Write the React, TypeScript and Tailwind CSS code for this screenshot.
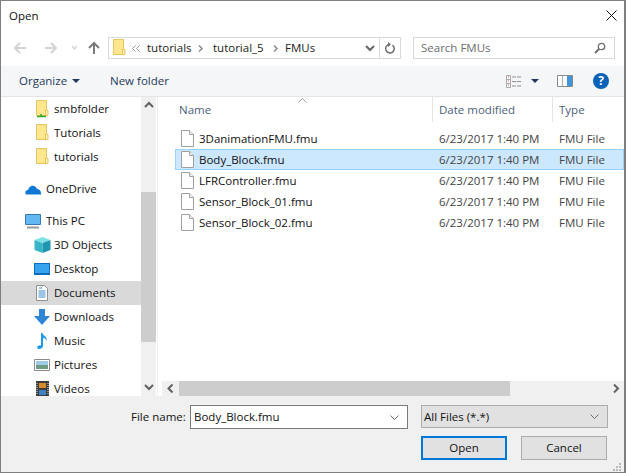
import type { ReactNode } from "react";

function FolderIcon({ share }: { share?: boolean }) {
  return (
    <svg width="14" height="18" viewBox="0 0 14 18" className="shrink-0">
      <path d="M1.500 .5h10v15h-10z" fill="#ffe68f" stroke="#e8c65d" />
      <path d="M10.500 10.500h2.500v5h-2.500z" fill="#fff3bd" stroke="#e8c65d" />
      {share && <path d="M6 14v2M2 16.500h9" stroke="#2fa82f" strokeWidth="1.600" fill="none" />}
    </svg>
  );
}

function FileIcon() {
  return (
    <svg width="13" height="17" viewBox="0 0 13 17" className="shrink-0">
      <path d="M.5 .5h8l4 4v12H.5z" fill="#fff" stroke="#a0a0a0" />
      <path d="M8.500 .5v4h4" fill="#f2f2f2" stroke="#a0a0a0" />
    </svg>
  );
}

function Chevron({ dir, color = "#606060" }: { dir: "up" | "down" | "left" | "right"; color?: string }) {
  const paths = {
    up: "M1 6l4-4 4 4",
    down: "M1 2l4 4 4-4",
    left: "M6.500 .5l-4 4 4 4",
    right: "M3 .5l4 4-4 4",
  };
  return (
    <svg width="10" height="9" viewBox="0 0 10 9">
      <path d={paths[dir]} fill="none" stroke={color} strokeWidth="2" />
    </svg>
  );
}

function Caret() {
  return (
    <svg width="8" height="4" viewBox="0 0 8 4">
      <path d="M0 0h8L4 4z" fill="#1e395b" />
    </svg>
  );
}

function Crumb() {
  return (
    <svg width="5" height="7" viewBox="0 0 5 7">
      <path d="M1 .5l3 3-3 3" fill="none" stroke="#8a8a8a" strokeWidth="1.500" />
    </svg>
  );
}

function NavRow({ icon, label, selected }: { icon: ReactNode; label: string; selected?: boolean }) {
  return (
    <div className={`h-6 flex items-center shrink-0 pl-[32px] ${selected ? "bg-[#d9d9d9]" : ""}`}>
      <div className="w-[18px] h-[18px] flex items-center justify-center shrink-0">{icon}</div>
      <span className="ml-[3px] whitespace-nowrap">{label}</span>
    </div>
  );
}

function FileRow({ name, selected }: { name: string; selected?: boolean }) {
  return (
    <div
      className={`h-[21px] flex items-center shrink-0 border whitespace-nowrap ${
        selected ? "bg-[#cce8ff] border-[#99d1ff]" : "border-transparent"
      }`}
    >
      <div className="w-[263px] pl-[5px] flex items-center shrink-0">
        <FileIcon />
        <span className="ml-[5px]">{name}</span>
      </div>
      <span className="w-[120px] shrink-0 text-[#444]">6/23/2017 1:40 PM</span>
      <span className="text-[#444]">FMU File</span>
    </div>
  );
}

const files = ["3DanimationFMU.fmu", "Body_Block.fmu", "LFRController.fmu", "Sensor_Block_01.fmu", "Sensor_Block_02.fmu"];

export default function App() {
  return (
    <div className="w-[626px] h-[473px] relative overflow-hidden bg-white border border-[#7f7f7f] border-r-2 flex flex-col text-[11.5px] leading-none text-[#111] font-['Open_Sans',sans-serif]">
      {/* Title bar */}
      <div className="h-[29px] shrink-0 flex items-center justify-between pl-[8px] pr-[7px]">
        <span>Open</span>
        <svg width="11" height="11" viewBox="0 0 11 11">
          <path d="M.5 .5l10 10M10.500 .5l-10 10" stroke="#111" strokeWidth="1" fill="none" />
        </svg>
      </div>

      {/* Address row */}
      <div className="h-[36px] shrink-0 flex items-center pl-[13px]">
        <svg width="92" height="14" viewBox="0 0 92 14" className="shrink-0">
          <path d="M1 7h11M6 2L1 7l5 5" fill="none" stroke="#d3d3d3" strokeWidth="2" />
          <path d="M31 7h11M37 2l5 5-5 5" fill="none" stroke="#d3d3d3" strokeWidth="2" />
          <path d="M58 5l2.500 3 2.500-3" fill="none" stroke="#d3d3d3" strokeWidth="1.300" />
          <path d="M80 13V2M75 7l5-5 5 5" fill="none" stroke="#7a7a7a" strokeWidth="2" />
        </svg>
        <div className="ml-[2px] w-[293px] h-[22px] border border-[#d9d9d9] flex items-center pl-[3px] shrink-0">
          <FolderIcon />
          <svg width="8" height="7" viewBox="0 0 8 7" className="ml-[6px]">
            <path d="M3.500 .5l-3 3 3 3M7.500 .5l-3 3 3 3" fill="none" stroke="#999" />
          </svg>
          <span className="ml-[7px] w-[46px] text-[#222]">tutorials</span>
          <span className="ml-[5px] flex"><Crumb /></span>
          <span className="ml-[10px] w-[50px] text-[#222]">tutorial_5</span>
          <span className="ml-[10px] flex"><Crumb /></span>
          <span className="ml-[7px] text-[#222]">FMUs</span>
          <div className="ml-auto flex items-center h-full">
            <Chevron dir="down" color="#666" />
            <div className="ml-[4px] w-px h-full bg-[#d9d9d9]" />
            <svg width="12" height="13" viewBox="0 0 12 13" className="mx-[4px]">
              <path d="M8.500 3.200a4.300 4.300 0 1 1-3-.8" fill="none" stroke="#6e6e6e" strokeWidth="1.500" />
              <path d="M4 0l3 2.500-3 2.500z" fill="#6e6e6e" />
            </svg>
          </div>
        </div>
        <div className="ml-[12px] w-[202px] h-[22px] border border-[#d9d9d9] flex items-center justify-between pl-[7px] pr-[8px] shrink-0 text-[#6d6d6d]">
          <span>Search FMUs</span>
          <svg width="12" height="12" viewBox="0 0 12 12">
            <circle cx="7.500" cy="4.500" r="3.200" fill="none" stroke="#6e6e6e" strokeWidth="1.300" />
            <path d="M5 7l-4 4" stroke="#6e6e6e" strokeWidth="2" />
          </svg>
        </div>
      </div>

      {/* Command bar */}
      <div className="h-[31px] shrink-0 bg-[#f5f6f7] border-b border-[#e5e5e5] flex items-center pl-[18px] text-[#1e395b]">
        <span className="w-[48px]">Organize</span>
        <span className="ml-[5px] flex"><Caret /></span>
        <span className="ml-[30px]">New folder</span>
        <div className="ml-auto flex items-center pr-[15px]">
          <svg width="16" height="13" viewBox="0 0 16 13">
            <path d="M.5 .5h4v12h-4zM.5 4.500h4M.5 8.500h4" fill="#fff" stroke="#a8a8a8" />
            <path d="M6 2h9M6 6.500h9M6 11h9" stroke="#8f8f8f" strokeDasharray="4 1" />
            <path d="M2 2h1M2 6h1M2 10h1" stroke="#c05050" />
          </svg>
          <span className="ml-[9px] flex"><Caret /></span>
          <svg width="16" height="12" viewBox="0 0 16 12" className="ml-[18px]">
            <path d="M.5 .5h15v11H.5z" fill="#fff" stroke="#8a8a8a" />
            <path d="M10 1h5v10h-5z" fill="#3f94dc" />
            <path d="M5.500 1v10" stroke="#b0b0b0" />
          </svg>
          <div className="ml-[20px] w-[16px] h-[16px] rounded-full bg-[#0a62b8] text-white font-bold text-[12px] flex items-center justify-center">?</div>
        </div>
      </div>

      {/* Main area */}
      <div className="flex-1 min-h-0 flex">
        {/* Navigation pane */}
        <div className="w-[140px] shrink-0 flex flex-col overflow-hidden">
          <NavRow label="smbfolder" icon={<FolderIcon share />} />
          <NavRow label="Tutorials" icon={<FolderIcon />} />
          <NavRow label="tutorials" icon={<FolderIcon />} />
          <div className="h-2 shrink-0" />
          <div className="h-6 shrink-0 flex items-center pl-[24px]">
            <svg width="17" height="11" viewBox="0 0 17 11">
              <path d="M1 10.500c-1.500-2-.5-4.500 2-4.500 .8-3 3.500-5 6-4 1.500 .5 2.500 1.500 3 3 2.500 0 4.500 2.500 4 5.500z" fill="#0f78d4" />
            </svg>
            <span className="ml-[4px]">OneDrive</span>
          </div>
          <div className="h-2 shrink-0" />
          <div className="h-6 shrink-0 flex items-center pl-[24px]">
            <svg width="16" height="15" viewBox="0 0 16 15">
              <path d="M.5 .5h15v10H.5z" fill="#62b8f0" stroke="#3a78b0" />
              <path d="M2 13.500h12" stroke="#9a9a9a" strokeWidth="2" />
            </svg>
            <span className="ml-[5px]">This PC</span>
          </div>
          <NavRow
            label="3D Objects"
            icon={
              <svg width="17" height="16" viewBox="0 0 17 16">
                <path d="M8.500 0l8 3-8 3-8-3z" fill="#7fe0e6" />
                <path d="M.5 3l8 3v10l-8-3z" fill="#38b6c8" />
                <path d="M16.500 3l-8 3v10l8-3z" fill="#1f95b0" />
              </svg>
            }
          />
          <NavRow
            label="Desktop"
            icon={
              <svg width="16" height="12" viewBox="0 0 16 12">
                <path d="M0 0h16v12H0z" fill="#0f6cbd" />
                <path d="M1 1h14v9H1z" fill="#36a3ee" />
              </svg>
            }
          />
          <NavRow
            selected
            label="Documents"
            icon={
              <svg width="12" height="16" viewBox="0 0 12 16">
                <path d="M.5 .5h8l3 3v12H.5z" fill="#fff" stroke="#8f8f8f" />
                <path d="M3 3h3M2.500 6h7M2.500 8h7M2.500 10h7M2.500 12h7" stroke="#3a8ad0" />
              </svg>
            }
          />
          <NavRow
            label="Downloads"
            icon={
              <svg width="16" height="16" viewBox="0 0 16 16">
                <path d="M5 0h6v7h5l-8 9-8-9h5z" fill="#2f86d8" />
              </svg>
            }
          />
          <NavRow
            label="Music"
            icon={
              <svg width="11" height="16" viewBox="0 0 11 16">
                <path d="M4 0h1.500c.5 3 5 3.500 4.500 8-.5-2-2.500-3-4-3v8c0 2-2 3-4 3s-2.500-2-1-3c1-.8 2-.8 3-.5z" fill="#1e9be8" />
              </svg>
            }
          />
          <NavRow
            label="Pictures"
            icon={
              <svg width="16" height="12" viewBox="0 0 16 12">
                <path d="M.5 .5h15v11H.5z" fill="#fff" stroke="#8a8a8a" />
                <path d="M2 2h12v4H2z" fill="#9ccbe8" />
                <path d="M2 6h12v4H2z" fill="#6f9a82" />
              </svg>
            }
          />
          <NavRow
            label="Videos"
            icon={
              <svg width="13" height="16" viewBox="0 0 13 16">
                <path d="M0 0h13v16H0z" fill="#3c3c3c" />
                <path d="M3 2h7v5H3z" fill="#d98a2b" />
                <path d="M3 9h7v5H3z" fill="#3f7fc4" />
                <path d="M1 2v12M12 2v12" stroke="#ddd" strokeDasharray="1 1" />
              </svg>
            }
          />
        </div>

        {/* Navigation scrollbar */}
        <div className="w-[15px] shrink-0 bg-[#f0f0f0] flex flex-col">
          <div className="h-[17px] shrink-0 flex items-center justify-center"><Chevron dir="up" /></div>
          <div className="h-[78px] shrink-0" />
          <div className="h-[150px] shrink-0 bg-[#cdcdcd]" />
          <div className="flex-1" />
          <div className="h-[17px] shrink-0 flex items-center justify-center"><Chevron dir="down" /></div>
        </div>
        <div className="w-[5px] shrink-0 flex justify-start"><div className="ml-[1px] w-px bg-[#f0f0f0]" /></div>

        {/* File list */}
        <div className="flex-1 min-w-0 relative flex flex-col">
          <div className="absolute left-[137px] top-[1px]">
            <svg width="9" height="5" viewBox="0 0 9 5">
              <path d="M.5 4.500l4-4 4 4" fill="none" stroke="#a0a0a0" />
            </svg>
          </div>
          <div className="h-[25px] shrink-0 flex text-[#4c607a] whitespace-nowrap">
            <div className="w-[272px] shrink-0 pl-[18px] flex items-center border-r border-[#e5e5e5]">Name</div>
            <div className="w-[120px] shrink-0 pl-[6px] flex items-center border-r border-[#e5e5e5]">Date modified</div>
            <div className="pl-[6px] flex items-center">Type</div>
          </div>
          <div className="h-[6px] shrink-0" />
          <div className="flex-1 min-h-0 pl-[14px] overflow-hidden flex flex-col">
            {files.map((f) => (
              <FileRow key={f} name={f} selected={f === "Body_Block.fmu"} />
            ))}
          </div>
          {/* Horizontal scrollbar */}
          <div className="h-[15px] shrink-0 ml-px bg-[#f0f0f0] flex items-stretch">
            <div className="w-[17px] flex items-center justify-center"><Chevron dir="left" /></div>
            <div className="w-[331px] bg-[#cdcdcd]" />
            <div className="flex-1" />
            <div className="w-[17px] flex items-center justify-center"><Chevron dir="right" /></div>
          </div>
        </div>
      </div>

      {/* Bottom panel */}
      <div className="h-[76px] shrink-0 border-t border-[#f0f0f0] bg-[#f0f0f0] flex flex-col pt-[8px] pl-[130px]">
        <div className="flex items-start">
          <span className="w-[53px] h-[24px] flex items-center whitespace-nowrap">File name:</span>
          <div className="ml-[6px] w-[218px] h-[24px] bg-white border border-[#7a7a7a] flex items-center justify-between pl-[3px] pr-[8px]">
            <span>Body_Block.fmu</span>
            <svg width="9" height="5" viewBox="0 0 9 5">
              <path d="M.5 .5l4 4 4-4" fill="none" stroke="#6e6e6e" />
            </svg>
          </div>
          <div className="ml-[13px] w-[187px] h-[23px] bg-[#e1e1e1] border border-[#adadad] flex items-center justify-between pl-[2px] pr-[8px]">
            <span>All Files (*.*)</span>
            <svg width="9" height="5" viewBox="0 0 9 5">
              <path d="M.5 .5l4 4 4-4" fill="none" stroke="#6e6e6e" />
            </svg>
          </div>
        </div>
        <div className="mt-[7px] ml-[290px] flex gap-[14px]">
          <div className="w-[86px] h-[24px] bg-[#e1e1e1] border-2 border-[#0078d7] flex items-center justify-center">Open</div>
          <div className="w-[86px] h-[24px] bg-[#e1e1e1] border border-[#adadad] flex items-center justify-center">Cancel</div>
        </div>
      </div>

      {/* Size grip */}
      <svg width="8" height="8" viewBox="0 0 8 8" className="absolute right-[3px] bottom-[1px]">
        <path d="M6 0h2v2H6zM3 3h2v2H3zM6 3h2v2H6zM0 6h2v2H0zM3 6h2v2H3zM6 6h2v2H6z" fill="#b8b8b8" />
      </svg>
    </div>
  );
}
